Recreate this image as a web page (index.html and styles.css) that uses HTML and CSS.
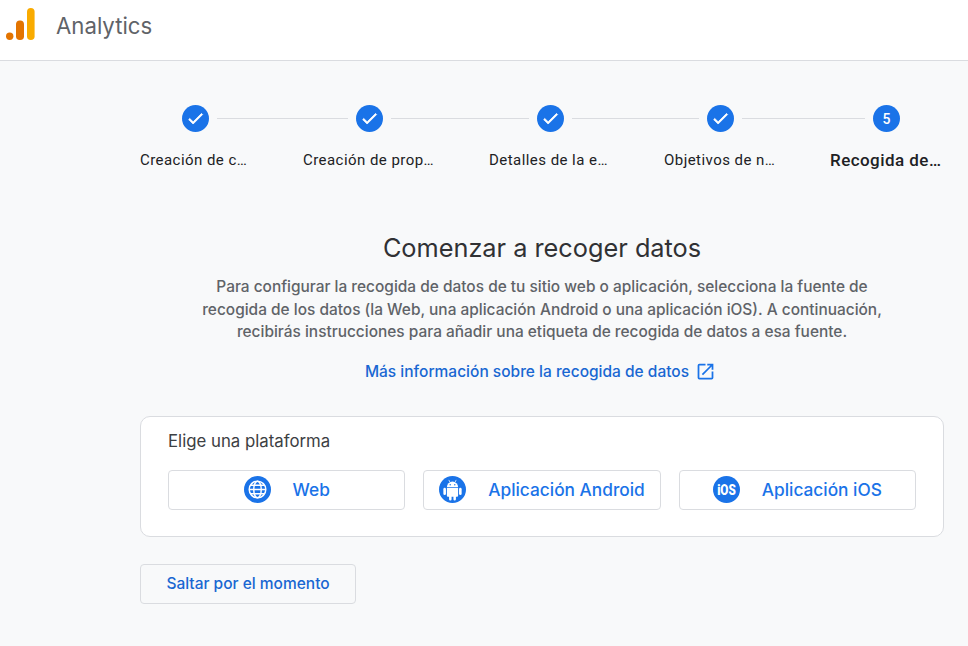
FILE: index.html
```html
<!DOCTYPE html>
<html lang="es">
<head>
<meta charset="utf-8">
<title>Analytics</title>
<link rel="stylesheet" href="styles.css">
</head>
<body>
<header class="topbar">
  <svg class="logo" width="36" height="42" viewBox="0 0 36 42" aria-hidden="true">
    <circle cx="9.7" cy="36.3" r="3.7" fill="#e37400"/>
    <rect x="16" y="20.5" width="8" height="19.5" rx="3.8" fill="#e37400"/>
    <rect x="27" y="8" width="7.6" height="32" rx="3.8" fill="#f9ab00"/>
  </svg>
  <span class="brand">Analytics</span>
</header>
<main class="content">
  <div class="stepper">
    <div class="track">
      <span class="dot"><svg viewBox="0 0 24 24" width="19" height="19"><path d="M9 16.2 4.8 12l-1.4 1.4L9 19 21 7l-1.4-1.4z" fill="#fff" stroke="#fff" stroke-width="1"/></svg></span>
      <span class="line line-a"></span>
      <span class="dot"><svg viewBox="0 0 24 24" width="19" height="19"><path d="M9 16.2 4.8 12l-1.4 1.4L9 19 21 7l-1.4-1.4z" fill="#fff" stroke="#fff" stroke-width="1"/></svg></span>
      <span class="line line-b"></span>
      <span class="dot"><svg viewBox="0 0 24 24" width="19" height="19"><path d="M9 16.2 4.8 12l-1.4 1.4L9 19 21 7l-1.4-1.4z" fill="#fff" stroke="#fff" stroke-width="1"/></svg></span>
      <span class="line line-c"></span>
      <span class="dot"><svg viewBox="0 0 24 24" width="19" height="19"><path d="M9 16.2 4.8 12l-1.4 1.4L9 19 21 7l-1.4-1.4z" fill="#fff" stroke="#fff" stroke-width="1"/></svg></span>
      <span class="line line-d"></span>
      <span class="dot dot-num">5</span>
    </div>
    <div class="labels">
      <span class="label label-a">Creación de c…</span>
      <span class="label label-b">Creación de prop…</span>
      <span class="label label-c">Detalles de la e…</span>
      <span class="label label-d">Objetivos de n…</span>
      <span class="label label-e">Recogida de…</span>
    </div>
  </div>

  <section class="intro">
    <h1 class="title">Comenzar a recoger datos</h1>
    <p class="desc">Para configurar la recogida de datos de tu sitio web o aplicación, selecciona la fuente de<br>recogida de los datos (la Web, una aplicación Android o una aplicación iOS). A continuación,<br>recibirás instrucciones para añadir una etiqueta de recogida de datos a esa fuente.</p>
    <a class="more" href="#">Más información sobre la recogida de datos
      <svg class="ext" viewBox="0 0 24 24" width="21" height="21"><path d="M19 19H5V5h7V3H5a2 2 0 0 0-2 2v14a2 2 0 0 0 2 2h14a2 2 0 0 0 2-2v-7h-2v7zM14 3v2h3.59l-9.83 9.83 1.41 1.41L19 6.41V10h2V3h-7z" fill="#1a73e8"/></svg>
    </a>
  </section>

  <section class="card">
    <h2 class="card-title">Elige una plataforma</h2>
    <div class="platforms">
      <button class="platform">
        <svg class="pic" viewBox="0 0 26 26" width="27" height="27">
          <circle cx="13" cy="13" r="13" fill="#1a73e8"/>
          <g fill="none" stroke="#fff" stroke-width="1.4">
            <circle cx="13" cy="13" r="8"/>
            <ellipse cx="13" cy="13" rx="3.6" ry="8"/>
            <path d="M5 13h16M6.2 9h13.6M6.2 17h13.6"/>
          </g>
        </svg>
        <span>Web</span>
      </button>
      <button class="platform">
        <svg class="pic" viewBox="0 0 26 26" width="27" height="27">
          <circle cx="13" cy="13" r="13" fill="#1a73e8"/>
          <g fill="#fff">
            <path d="M7.6 10.8a5.4 5.4 0 0 1 10.8 0z"/>
            <path d="M7.6 11.6h10.8v7.4a1 1 0 0 1-1 1h-1.1v2.4a1.2 1.2 0 0 1-2.4 0V20h-1.8v2.4a1.2 1.2 0 0 1-2.4 0V20H8.6a1 1 0 0 1-1-1z"/>
            <rect x="4.2" y="11.4" width="2.5" height="7" rx="1.25"/>
            <rect x="19.3" y="11.4" width="2.5" height="7" rx="1.25"/>
            <path d="M9.6 3.6l1.2 2-.5.3-1.2-2zM16.4 3.6l-1.2 2 .5.3 1.2-2z"/>
          </g>
          <circle cx="10.8" cy="8.4" r=".7" fill="#1a73e8"/>
          <circle cx="15.2" cy="8.4" r=".7" fill="#1a73e8"/>
        </svg>
        <span>Aplicación Android</span>
      </button>
      <button class="platform">
        <svg class="pic" viewBox="0 0 26 26" width="27" height="27">
          <circle cx="13" cy="13" r="13" fill="#1a73e8"/>
          <text class="ios-mark" x="13" y="18.2" text-anchor="middle" textLength="18" lengthAdjust="spacingAndGlyphs">iOS</text>
        </svg>
        <span>Aplicación iOS</span>
      </button>
    </div>
  </section>

  <button class="skip">Saltar por el momento</button>
</main>
</body>
</html>
```

FILE: styles.css
```css
* { box-sizing: border-box; }
html, body { margin: 0; height: 100%; }
body {
  background: #f8f9fa;
  font-family: "Inter", "Roboto", sans-serif;
  color: #202124;
  overflow: hidden;
}
.topbar {
  height: 61px;
  background: #fff;
  border-bottom: 1px solid #dadce0;
  display: flex;
  align-items: flex-start;
}
.logo { display: block; flex: none; }
.brand {
  margin: 11px 0 0 20px;
  font-size: 22.2px;
  line-height: 30px;
  color: #5f6368;
}
.content {
  margin-left: 140px;
  width: 804px;
  padding-top: 44px;
}
.track {
  display: flex;
  align-items: center;
  padding-left: 42px;
  height: 27px;
}
.dot {
  flex: none;
  width: 27px;
  height: 27px;
  border-radius: 50%;
  background: #1a73e8;
  color: #fff;
  display: flex;
  align-items: center;
  justify-content: center;
  font: 500 14px "Roboto", sans-serif;
}
.line {
  flex: none;
  height: 1px;
  background: #dadce0;
  margin: 0 8px;
}
.line-a { width: 131px; }
.line-b { width: 137.5px; }
.line-c { width: 127px; }
.line-d { width: 123.5px; }
.labels {
  display: flex;
  align-items: center;
  height: 22px;
  margin-top: 17px;
}
.label {
  flex: none;
  font: 400 15px/22px "Roboto", sans-serif;
  letter-spacing: .45px;
  white-space: nowrap;
  color: #202124;
}
.label-a { width: 107px; }
.label-b { width: 131px; margin-left: 56px; }
.label-c { width: 119px; margin-left: 55px; }
.label-d { width: 112px; margin-left: 56px; }
.label-e { width: 114px; margin-left: 54px; font-size: 17px; font-weight: 500; }
.intro {
  display: flex;
  flex-direction: column;
  align-items: center;
  margin-top: 61px;
}
.title {
  margin: 0;
  font-size: 25.3px;
  line-height: 32px;
  font-weight: 400;
  color: #303134;
}
.desc {
  margin: 12px 0 0;
  text-align: center;
  font-size: 15.45px;
  line-height: 22.5px;
  font-weight: 500;
  color: #5f6368;
  white-space: nowrap;
}
.more {
  display: flex;
  align-items: center;
  gap: 6px;
  margin-top: 16px;
  font-size: 15.5px;
  font-weight: 500;
  line-height: 24px;
  color: #1967d2;
  text-decoration: none;
}
.ext { display: block; margin-right: 3px; }
.card {
  margin-top: 32px;
  height: 121px;
  background: #fff;
  border: 1px solid #dadce0;
  border-radius: 10px;
  padding: 13px 27px 0;
}
.card-title {
  margin: 0;
  font-size: 16.8px;
  line-height: 22px;
  font-weight: 400;
  color: #3c4043;
}
.platforms {
  display: flex;
  gap: 18px;
  margin-top: 18px;
}
.platform {
  flex: 1;
  height: 40px;
  background: #fff;
  border: 1px solid #dadce0;
  border-radius: 4px;
  display: flex;
  align-items: center;
  justify-content: center;
  gap: 22px;
  font-family: inherit;
  font-size: 17.3px;
  font-weight: 500;
  color: #1a73e8;
  padding: 0;
}
.pic { display: block; flex: none; }
.ios-mark { font: 900 14.5px "Roboto", sans-serif; fill: #fff; }
.skip {
  display: block;
  margin-top: 27px;
  width: 216px;
  height: 40px;
  background: #f8f9fa;
  border: 1px solid #dadce0;
  border-radius: 4px;
  font-family: inherit;
  font-size: 15.5px;
  font-weight: 500;
  color: #1967d2;
  padding: 0;
}
```
